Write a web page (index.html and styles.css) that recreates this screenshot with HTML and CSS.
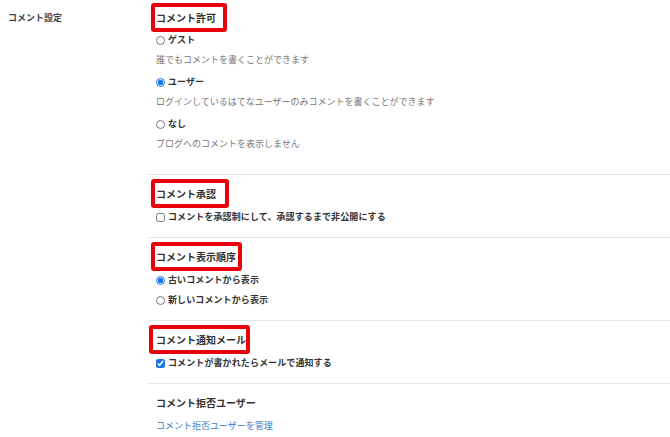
FILE: index.html
```html
<!DOCTYPE html>
<html>
<head>
  <meta charset="UTF-8">
  <title>コメント設定</title>
  <link rel="stylesheet" href="styles.css">
</head>
<body>

<div class="settings">
  <div class="settings-label">コメント設定</div>
  <div class="settings-body">

    <section class="group group-first">
      <h3 class="group-title"><span class="mark mark-allow">コメント許可</span></h3>
      <label class="option"><input type="radio" name="allow"> ゲスト</label>
      <p class="desc">誰でもコメントを書くことができます</p>
      <label class="option"><input type="radio" name="allow" checked> ユーザー</label>
      <p class="desc">ログインしているはてなユーザーのみコメントを書くことができます</p>
      <label class="option"><input type="radio" name="allow"> なし</label>
      <p class="desc">ブログへのコメントを表示しません</p>
    </section>

    <section class="group">
      <h3 class="group-title"><span class="mark mark-approve">コメント承認</span></h3>
      <label class="option"><input type="checkbox"> コメントを承認制にして、承認するまで非公開にする</label>
    </section>

    <section class="group">
      <h3 class="group-title"><span class="mark mark-order">コメント表示順序</span></h3>
      <label class="option"><input type="radio" name="order" checked> 古いコメントから表示</label>
      <label class="option"><input type="radio" name="order"> 新しいコメントから表示</label>
    </section>

    <section class="group">
      <h3 class="group-title"><span class="mark mark-mail">コメント通知メール</span></h3>
      <label class="option"><input type="checkbox" checked> コメントが書かれたらメールで通知する</label>
    </section>

    <section class="group">
      <h3 class="group-title">コメント拒否ユーザー</h3>
      <a class="manage-link" href="#">コメント拒否ユーザーを管理</a>
    </section>

  </div>
</div>

</body>
</html>
```

FILE: styles.css
```css
body {
  margin: 0;
  background: #fff;
  color: #333;
  font-family: "Noto Sans CJK JP", "Noto Sans", sans-serif;
}
.settings {
  display: grid;
  grid-template-columns: 148px 1fr;
}
.settings-label {
  padding: 8px 0 0 8px;
  font-size: 9px;
  line-height: 20px;
  font-weight: bold;
  color: #444;
}
.group {
  padding: 9px 0 10px 8px;
  border-top: 1px solid #e6e6e6;
}
.group-first {
  border-top: none;
  padding-top: 8px;
  padding-bottom: 20px;
}
.group-title {
  margin: 0;
  font-size: 10px;
  line-height: 20px;
  font-weight: bold;
  color: #333;
}
.option {
  display: flex;
  align-items: center;
  gap: 3px;
  margin-top: 3px;
  font-size: 9px;
  line-height: 20px;
  font-weight: bold;
  color: #333;
  letter-spacing: 0.1px;
}
.option + .option {
  margin-top: 0;
}
.group-first .option {
  margin-top: 2px;
}
.option input {
  width: 9px;
  height: 9px;
  margin: 0;
  accent-color: #1a73e8;
}
.desc {
  margin: 0;
  font-size: 9px;
  line-height: 20px;
  color: #777;
}
.manage-link {
  display: block;
  margin-top: 3px;
  font-size: 9px;
  line-height: 20px;
  color: #3a7bc8;
  text-decoration: none;
}

/* red annotation boxes */
.mark {
  position: relative;
  display: inline-block;
}
.mark::after {
  content: "";
  position: absolute;
  top: -5px;
  bottom: -4px;
  left: -5px;
  right: -11px;
  border: 4px solid #e8000b;
  border-radius: 3px;
}
.mark-approve::after { right: -13px; }
.mark-order::after { right: -6px; }
.mark-mail::after { right: -4px; left: -7px; }
```
